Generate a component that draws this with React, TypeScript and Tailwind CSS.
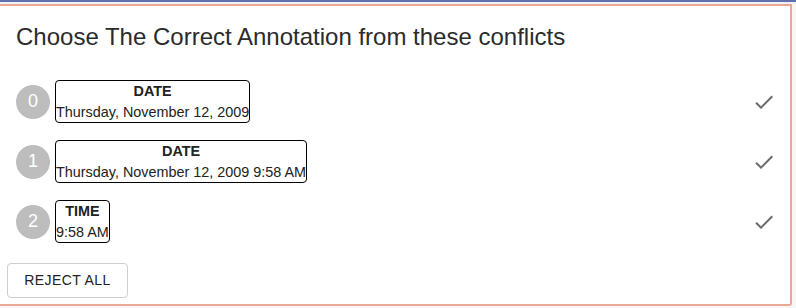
import React from 'react';

const conflicts = [
  { id: 0, label: 'DATE', value: 'Thursday, November 12, 2009' },
  { id: 1, label: 'DATE', value: 'Thursday, November 12, 2009 9:58 AM' },
  { id: 2, label: 'TIME', value: '9:58 AM' },
];

const CheckIcon = () => (
  <svg className="w-6 h-6" viewBox="0 0 24 24" fill="#6b6b6b">
    <path d="M9 16.17 4.83 12l-1.42 1.41L9 19 21 7l-1.41-1.41z" />
  </svg>
);

const App: React.FC = () => {
  return (
    <div className="w-[796px] h-[308px] bg-[#f7f7f7] overflow-hidden" style={{ fontFamily: '"Liberation Sans", Arial, sans-serif' }}>
      <div className="h-[2px] bg-[#6270b0]" />
      <div className="h-[2px] bg-[#eef0f6]" />
      <div className="w-[792px] h-[302px] bg-white border-t-2 border-r-2 border-b-2 border-[#eaa892] rounded-br-[3px] flex flex-col">
        <h1 className="text-[24px] leading-7 text-[#2b2b2b] ml-4 mt-[17px]">Choose The Correct Annotation from these conflicts</h1>

        <div className="flex flex-col gap-[17px] mt-[29px]">
          {conflicts.map((c) => (
            <div key={c.id} className="flex items-center pr-[14px]">
              <div className="w-[34px] h-[34px] ml-4 rounded-full bg-[#bdbdbd] text-white text-[18px] flex items-center justify-center shrink-0">
                {c.id}
              </div>
              <div className="ml-[5px] border border-black rounded-[4px] flex flex-col items-center text-[#222] text-[14.4px] leading-[20.5px]">
                <span className="font-bold">{c.label}</span>
                <span>{c.value}</span>
              </div>
              <div className="ml-auto">
                <CheckIcon />
              </div>
            </div>
          ))}
        </div>

        <div className="mt-[20px] ml-[7px]">
          <button className="w-[121px] h-[35px] border border-[#cfcfcf] rounded-[4px] text-[14px] text-[#222] tracking-[0.03em] bg-white">
            REJECT ALL
          </button>
        </div>
      </div>
    </div>
  );
};

export default App;
